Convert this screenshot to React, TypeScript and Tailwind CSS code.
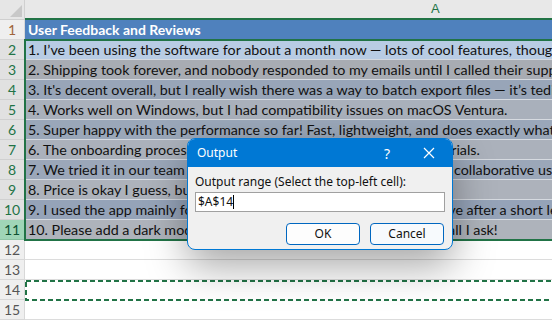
import React from 'react';

const rows = [
  { text: 'User Feedback and Reviews', bg: 'bg-[#4f81bd]', head: true },
  { text: '1. I\u2019ve been using the software for about a month now \u2014 lots of cool features, though it crashes sometimes.', bg: 'bg-[#b8cce4]' },
  { text: '2. Shipping took forever, and nobody responded to my emails until I called their support line.', bg: 'bg-[#a8acb3]' },
  { text: '3. It\'s decent overall, but I really wish there was a way to batch export files \u2014 it\u2019s tedious.', bg: 'bg-[#98a5b8]' },
  { text: '4. Works well on Windows, but I had compatibility issues on macOS Ventura.', bg: 'bg-[#a9b0bb]' },
  { text: '5. Super happy with the performance so far! Fast, lightweight, and does exactly what I need.', bg: 'bg-[#9aa7b9]' },
  { text: '6. The onboarding process was confusing; had to watch several tutorials.', bg: 'bg-[#abb1bb]' },
  { text: '7. We tried it in our team of 12 people, and it truly lacks support for collaborative use cases.', bg: 'bg-[#9ba7b9]' },
  { text: '8. Price is okay I guess, but not sure it\u2019s worth it.', bg: 'bg-[#adb2bb]' },
  { text: '9. I used the app mainly for my personal work, but sadly I had to leave after a short learning curve.', bg: 'bg-[#95a3b8]' },
  { text: '10. Please add a dark mode and better keyboard shortcuts \u2014 that\u2019s all I ask!', bg: 'bg-[#aeb3bb]' },
];

export default function App() {
  return (
    <div className="relative w-[552px] h-[320px] overflow-hidden bg-white font-['Lato',sans-serif] select-none">
      {/* column header */}
      <div className="flex h-[20px]">
        <div className="relative w-[25px] h-full bg-[#e6e6e6] border-r border-[#d0d0d0] border-b border-b-[#cfcfcf]">
          <div className="absolute right-[2px] bottom-[2px] w-0 h-0 border-l-[12px] border-l-transparent border-b-[12px] border-b-[#c8c8c8]" />
        </div>
        <div className="flex-1 h-full bg-[#e8e8e8] border-b-2 border-[#217346] flex items-center">
          <span className="ml-[406px] text-[13px] text-[#217346] font-['Liberation_Sans',sans-serif]">A</span>
        </div>
      </div>

      {rows.map((r, i) => {
        const n = i + 1;
        const selected = n >= 2 && n <= 11;
        const active = n === 11;
        return (
          <div key={n} className="flex h-[20px]">
            <div
              className={
                'w-[25px] h-full flex items-center justify-center text-[14px] border-r border-b ' +
                (active
                  ? 'bg-[#9fd5b7] text-[#0f5132] border-[#8fc4a6]'
                  : selected
                  ? 'bg-[#e1e1e1] text-[#217346] border-[#d0d0d0]'
                  : 'bg-[#efefef] text-[#a0643a] border-[#d8d8d8]')
              }
            >
              {n}
            </div>
            <div
              className={
                'flex-1 h-full flex items-center pl-[3px] whitespace-nowrap overflow-hidden border-b border-[#d6dae0] ' +
                r.bg +
                (r.head ? ' text-white font-bold text-[14px]' : ' text-[#111] text-[14.3px]')
              }
            >
              {r.text}
            </div>
          </div>
        );
      })}

      {[12, 13, 14, 15].map((n) => (
        <div key={n} className="flex h-[20px]">
          <div className="w-[25px] h-full flex items-center justify-center text-[14px] text-[#555] bg-[#efefef] border-r border-b border-[#d8d8d8]">
            {n}
          </div>
          <div className={'flex-1 h-full ' + (n === 14 ? '' : 'border-b border-[#dcdcdc]')} />
        </div>
      ))}

      {/* selection border */}
      <div className="absolute left-[24px] top-[39px] w-[540px] h-[202px] border-2 border-[#217346] pointer-events-none" />

      {/* marching ants around A14 */}
      <svg className="absolute left-[25px] top-[280px] pointer-events-none" width="540" height="21">
        <rect x="1" y="1" width="540" height="19" fill="none" stroke="#217346" strokeWidth="2" strokeDasharray="5 3" />
      </svg>

      {/* dialog */}
      <div className="absolute left-[187px] top-[138px] w-[266px] h-[112px] rounded-[8px] border border-[#0078d4] bg-[#f0f0f0] shadow-[0_16px_40px_rgba(0,0,0,0.35)] overflow-hidden font-['Noto_Sans',sans-serif]">
        <div className="h-[28px] bg-[#0078d4] flex items-center text-white">
          <span className="ml-[9px] text-[12px]">Output</span>
          <span className="ml-auto mr-[33px] text-[14px]">?</span>
          <svg width="12" height="12" viewBox="0 0 12 12" className="mr-[17px]">
            <path d="M1 1L11 11M11 1L1 11" stroke="white" strokeWidth="1.2" />
          </svg>
        </div>
        <div className="px-[7px] pt-[7px]">
          <div className="text-[12px] text-[#111] leading-[16px]">Output range (Select the top-left cell):</div>
          <div className="mt-[2px] h-[20px] bg-white border border-[#a0a0a0] flex items-center px-[2px] text-[12px] text-[#111]">
            $A$14<span className="w-px h-[14px] bg-black" />
          </div>
          <div className="flex justify-end gap-[10px] mt-[11px] pr-[1px]">
            <button className="w-[74px] h-[22px] rounded-[4px] border border-[#0067c0] bg-[#fdfdfd] text-[12px] text-[#111]">OK</button>
            <button className="w-[74px] h-[22px] rounded-[4px] border border-[#0067c0] bg-[#f7fafd] text-[12px] text-[#111]">Cancel</button>
          </div>
        </div>
      </div>
    </div>
  );
}
